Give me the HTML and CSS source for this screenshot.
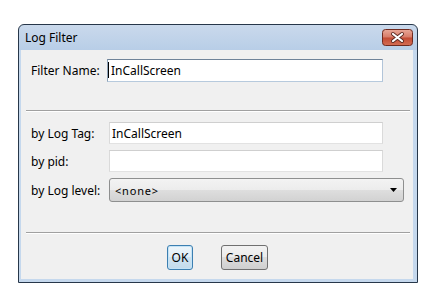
FILE: index.html
```html
<!DOCTYPE html>
<html lang="en">

<head>
    <meta charset="UTF-8">
    <title>Log Filter</title>
    <link rel="stylesheet" href="styles.css">
</head>

<body>

    <div class="window">
        <div class="titlebar">
            <span class="title">Log Filter</span>
            <button class="close-btn" title="Close">
                <svg width="31" height="17" viewBox="0 0 31 17">
                    <defs>
                        <linearGradient id="closeGrad" x1="0" y1="0" x2="0" y2="1">
                            <stop offset="0" stop-color="#e9a898"/>
                            <stop offset="0.48" stop-color="#d77b68"/>
                            <stop offset="0.52" stop-color="#c24a33"/>
                            <stop offset="1" stop-color="#d46e55"/>
                        </linearGradient>
                    </defs>
                    <rect x="0.5" y="0.5" width="30" height="16" rx="3" fill="url(#closeGrad)" stroke="#6f2b20"/>
                    <path d="M11 5 L20 12 M20 5 L11 12" stroke="#5b2a22" stroke-width="4" stroke-linecap="round"/>
                    <path d="M11 5 L20 12 M20 5 L11 12" stroke="#fff" stroke-width="2.2" stroke-linecap="round"/>
                </svg>
            </button>
        </div>

        <div class="panel">
            <div class="name-row">
                <label for="filterName">Filter Name:</label>
                <span class="field-wrap">
                    <input type="text" id="filterName" class="field focused" value="InCallScreen">
                    <span class="caret"></span>
                </span>
            </div>

            <div class="sep"></div>

            <div class="filters">
                <label for="logTag">by Log Tag:</label>
                <input type="text" id="logTag" class="field" value="InCallScreen">

                <label for="pid">by pid:</label>
                <input type="text" id="pid" class="field" value="">

                <label>by Log level:</label>
                <div class="combo">
                    <span>&lt;none&gt;</span>
                    <svg width="7" height="4" viewBox="0 0 7 4"><path d="M0 0 H7 L3.5 4 Z" fill="#000"/></svg>
                </div>
            </div>

            <div class="sep sep-bottom"></div>

            <div class="buttons">
                <button class="btn btn-default">OK</button>
                <button class="btn btn-cancel">Cancel</button>
            </div>
        </div>
    </div>

</body>

</html>
```

FILE: styles.css
```css
body {
    margin: 0;
    background: #fff;
    font-family: 'Noto Sans', 'DejaVu Sans', sans-serif;
    font-size: 12px;
    color: #000;
}

.window {
    box-sizing: border-box;
    width: 400px;
    height: 259px;
    margin: 24px 0 0 18px;
    padding: 0 4px 3px 2px;
    border: 1px solid #27374a;
    border-radius: 6px 6px 0 0;
    background: linear-gradient(#cad9ec, #b8cee7 25px, #c5d8ed 25px);
}

.titlebar {
    display: flex;
    justify-content: space-between;
    height: 25px;
    padding-left: 4px;
}

.title {
    line-height: 25px;
    font-size: 12px;
}

.close-btn {
    margin-top: 4px;
    padding: 0;
    width: 31px;
    height: 17px;
    border: none;
    background: none;
}

.close-btn svg {
    display: block;
}

.panel {
    height: 229px;
    padding-left: 10px;
    background: #f0f0f0;
    box-sizing: border-box;
}

.name-row {
    display: flex;
    align-items: center;
    padding-top: 9px;
}

.name-row label {
    width: 76px;
}

.field-wrap {
    position: relative;
    display: block;
}

.field {
    box-sizing: border-box;
    display: block;
    width: 274px;
    height: 22px;
    margin: 0;
    padding: 0 2px;
    font-family: inherit;
    font-size: 12px;
    color: #000;
    background: #fff;
    border: 1px solid;
    border-color: #cfcfcf #dadada #e2e2e2 #dadada;
    outline: none;
}

.field.focused {
    width: 276px;
    height: 23px;
    padding-left: 3px;
    border-color: #6f8399 #b2c5d9 #b7cadd #8fa3b8;
}

.caret {
    position: absolute;
    left: 1px;
    top: 3px;
    width: 1px;
    height: 16px;
    background: #000;
}

.sep {
    height: 0;
    margin: 28px 3px 0 -5px;
    border-top: 1px solid #a0a0a0;
    border-bottom: 1px solid #fff;
}

.sep-bottom {
    margin-top: 30px;
}

.filters {
    display: grid;
    grid-template-columns: 78px auto;
    grid-template-rows: 22px 22px 24px;
    row-gap: 6px;
    align-items: center;
    justify-items: start;
    margin-top: 10px;
}

.combo {
    box-sizing: border-box;
    display: flex;
    align-items: center;
    justify-content: space-between;
    width: 295px;
    height: 24px;
    padding: 0 6px 0 5px;
    border: 1px solid #8e8f8f;
    border-radius: 3px;
    background: linear-gradient(#f3f3f3, #ececec 50%, #dedede 50%, #d2d2d2);
    font-size: 11px;
    letter-spacing: 0.8px;
}

.buttons {
    display: flex;
    gap: 28px;
    margin-top: 11px;
    padding-left: 136px;
}

.btn {
    height: 25px;
    padding: 0;
    font-family: inherit;
    font-size: 12px;
    color: #000;
    border: 1px solid #707070;
    border-radius: 3px;
    background: linear-gradient(#f2f2f2, #ebebeb 50%, #dddddd 50%, #cfcfcf);
}

.btn-default {
    width: 26px;
    border-color: #3c7fb1;
    box-shadow: inset 0 0 0 1px #c4e3f6;
    background: linear-gradient(#edf5fa, #e1eef7 50%, #d0e4f1 50%, #c3dbeb);
}

.btn-cancel {
    width: 47px;
}
```
